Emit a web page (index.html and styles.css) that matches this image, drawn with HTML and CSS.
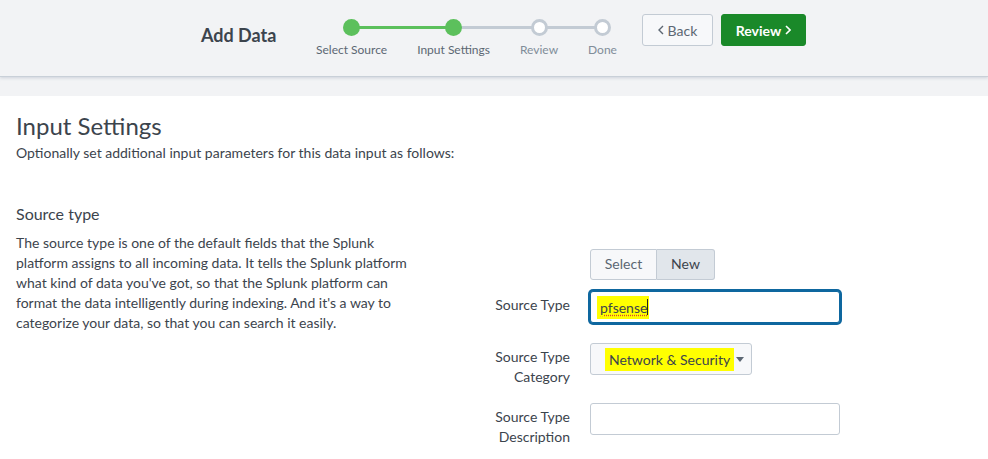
FILE: index.html
```html
<!DOCTYPE html>
<html lang="en">
<head>
<meta charset="utf-8">
<title>Add Data - Input Settings</title>
<link rel="stylesheet" href="styles.css">
</head>
<body>
<header class="topbar">
  <h1 class="title">Add Data</h1>
  <ol class="steps">
    <li class="step done right-green"><span class="dot"></span><span class="label">Select Source</span></li>
    <li class="step done left-green"><span class="dot"></span><span class="label">Input Settings</span></li>
    <li class="step todo"><span class="dot"></span><span class="label">Review</span></li>
    <li class="step todo last"><span class="dot"></span><span class="label">Done</span></li>
  </ol>
  <div class="nav-buttons">
    <button class="btn btn-back"><svg class="chev" width="6" height="10" viewBox="0 0 6 10"><path d="M5 1 1 5l4 4" fill="none" stroke="currentColor" stroke-width="1.4"/></svg>Back</button>
    <button class="btn btn-primary">Review<svg class="chev chev-r" width="6" height="10" viewBox="0 0 6 10"><path d="M1 1l4 4-4 4" fill="none" stroke="currentColor" stroke-width="1.6"/></svg></button>
  </div>
</header>
<div class="strip"></div>
<main class="content">
  <h2 class="page-title">Input Settings</h2>
  <p class="subtitle">Optionally set additional input parameters for this data input as follows:</p>
  <h3 class="section-title">Source type</h3>
  <div class="section">
    <p class="desc">The source type is one of the default fields that the Splunk platform assigns to all incoming data. It tells the Splunk platform what kind of data you've got, so that the Splunk platform can format the data intelligently during indexing. And it's a way to categorize your data, so that you can search it easily.</p>
    <div class="form">
      <div class="row row-toggle">
        <div class="label"></div>
        <div class="toggle">
          <button class="tbtn">Select</button>
          <button class="tbtn active">New</button>
        </div>
      </div>
      <div class="row">
        <div class="label">Source Type</div>
        <div class="input focused"><span class="hl hl-input"><span class="spell">pfsense</span></span><span class="caret"></span></div>
      </div>
      <div class="row row-tight">
        <div class="label">Source Type<br>Category</div>
        <div class="dropdown"><span class="hl hl-drop">Network &amp; Security</span><svg class="dd-caret" width="8" height="5" viewBox="0 0 8 5"><path d="M0 0h8L4 5z" fill="#5c6773"/></svg></div>
      </div>
      <div class="row">
        <div class="label">Source Type<br>Description</div>
        <div class="input"></div>
      </div>
    </div>
  </div>
</main>
</body>
</html>
```

FILE: styles.css
```css
* { box-sizing: border-box; }
html, body { margin: 0; padding: 0; }
body {
  font-family: Lato, "Open Sans", "Liberation Sans", sans-serif;
  color: #3c444d;
  background: #fff;
  width: 988px;
  height: 459px;
  overflow: hidden;
}
.topbar {
  height: 76px;
  background: #f2f3f5;
  display: flex;
  align-items: flex-start;
  padding: 14px 0 0 201px;
  box-shadow: 0 1px 0 #c9d0d8, 0 2px 3px rgba(180,188,200,0.6);
  position: relative;
  z-index: 1;
}
.title {
  margin: 10px 0 0 0;
  font-size: 18px;
  line-height: 22px;
  font-weight: 700;
  color: #3c444d;
  width: 76px;
  white-space: nowrap;
}
.steps {
  list-style: none;
  margin: 5px 0 0 39px;
  padding: 0;
  display: flex;
  gap: 30px;
}
.step {
  position: relative;
  display: flex;
  flex-direction: column;
  align-items: center;
}
.step::before, .step::after {
  content: "";
  position: absolute;
  top: 7px;
  height: 3px;
  background: #c3cbd4;
}
.step::before { left: -15px; right: 50%; }
.step::after { left: 50%; right: -15px; }
.step:first-child::before { display: none; }
.step.last::after { display: none; }
.step.right-green::after { background: #5cc05c; }
.step.left-green::before { background: #5cc05c; }
.dot {
  position: relative;
  z-index: 1;
  width: 17px;
  height: 17px;
  border-radius: 50%;
  background: #5cc05c;
}
.step.todo .dot {
  background: #fff;
  border: 3px solid #c3cbd4;
}
.label {
  margin-top: 7px;
  font-size: 12px;
  line-height: 14px;
  color: #5c6773;
  white-space: nowrap;
}
.step.todo .label { color: #818d99; }
.nav-buttons {
  display: flex;
  gap: 8px;
  margin-left: 25px;
}
.btn {
  height: 32px;
  border-radius: 3px;
  font-family: inherit;
  font-size: 14px;
  display: flex;
  align-items: center;
  justify-content: center;
  padding: 0;
  cursor: pointer;
}
.btn-back {
  width: 71px;
  background: #f7f8fa;
  border: 1px solid #c3cbd4;
  color: #5c6773;
}
.btn-primary {
  width: 85px;
  background: #1a8929;
  border: 1px solid #1a8929;
  color: #fff;
  font-weight: 700;
}
.chev { margin-right: 4px; }
.chev-r { margin: 0 0 0 4px; }
.strip {
  height: 20px;
  background: #f2f3f5;
}
.content {
  padding: 16px 16px 0 16px;
}
.page-title {
  margin: 0;
  font-size: 24px;
  line-height: 28px;
  font-weight: 400;
}
.subtitle {
  margin: 3px 0 0 0;
  font-size: 14px;
  line-height: 20px;
}
.section-title {
  margin: 40px 0 0 0;
  font-size: 16px;
  line-height: 22px;
  font-weight: 400;
}
.section {
  display: flex;
  align-items: flex-start;
  margin-top: 8px;
}
.desc {
  margin: 0 12px 0 0;
  width: 408px;
  font-size: 14px;
  line-height: 20px;
}
.form {
  padding-top: 16px;
}
.row {
  display: flex;
  gap: 20px;
  margin-bottom: 20px;
}
.row-toggle { margin-bottom: 11px; }
.row-tight { margin-bottom: 16px; }
.form .label {
  width: 134px;
  margin: 0;
  padding-top: 4px;
  text-align: right;
  font-size: 14px;
  line-height: 20px;
  color: #3c444d;
}
.toggle { display: flex; }
.tbtn {
  height: 31px;
  font-family: inherit;
  font-size: 14px;
  border: 1px solid #c3cbd4;
  background: #f7f8fa;
  color: #5c6773;
  padding: 0 0 2px 0;
}
.tbtn:first-child { width: 67px; border-radius: 3px 0 0 3px; }
.tbtn.active {
  width: 58px;
  background: #e1e6eb;
  color: #3c444d;
  border-left: none;
  border-radius: 0 3px 3px 0;
}
.input {
  width: 250px;
  height: 32px;
  border: 1px solid #c3cbd4;
  border-radius: 3px;
  background: #fff;
  display: flex;
  align-items: center;
  padding-left: 8px;
  font-size: 14px;
}
.input.focused {
  border: 1px solid #0e679f;
  box-shadow: 0 0 0 2px #0e679f;
  padding-left: 6px;
}
.hl { background: #ffff00; }
.hl-input { padding: 3px 2px 3px 3px; }
.spell {
  text-decoration: underline dotted #e0402f;
  text-underline-offset: 2px;
}
.caret {
  display: inline-block;
  width: 1px;
  height: 16px;
  background: #222;
  margin-left: -2px;
}
.dropdown {
  width: 162px;
  height: 32px;
  border: 1px solid #c3cbd4;
  border-radius: 3px;
  background: #f7f8fa;
  display: flex;
  align-items: center;
  padding-left: 14px;
  font-size: 14px;
  color: #3c444d;
}
.hl-drop { padding: 3px 4px 3px 4px; }
.dd-caret { margin-left: 2px; }
```
